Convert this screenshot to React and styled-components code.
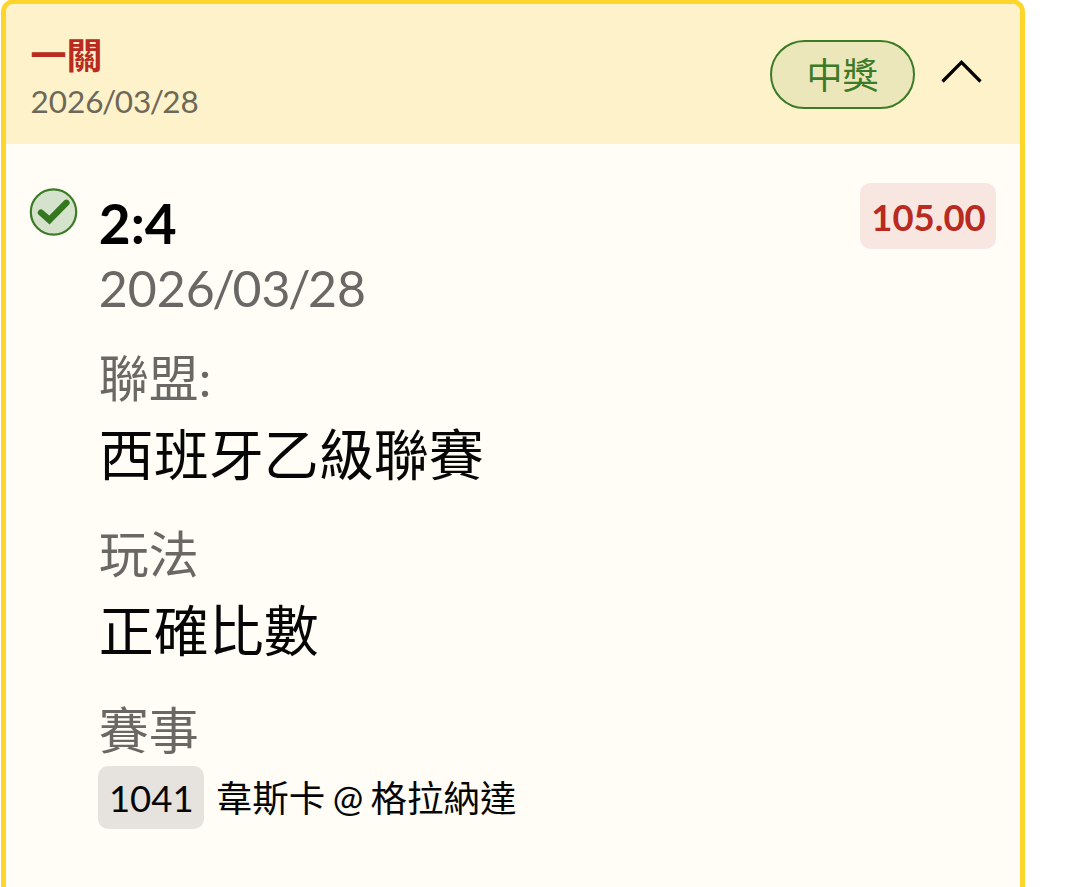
import React, { useState, useCallback } from 'react';
import styled, { createGlobalStyle, ThemeProvider } from 'styled-components';

const theme = {
    gold: '#fed52a',
    header: '#fef2cb',
    body: '#fffdf5',
    red: '#b92a20',
    green: '#3b7a27',
    text: '#060606',
};

const GlobalStyle = createGlobalStyle`
    *, *::before, *::after {
        box-sizing: border-box;
    }

    body {
        margin: 0;
        background: #fff;
        font-family: Lato, "Noto Sans CJK TC", sans-serif;
        overflow: hidden;
    }

    p, h2, h3, dl, dt, dd {
        margin: 0;
        font-weight: 400;
    }
`;

const Card = styled.article`
    width: 1024px;
    height: 920px;
    margin: -1px 0 -32px 1px;
    border: 5px solid ${(props) => props.theme.gold};
    border-radius: 13px;
    background: ${(props) => props.theme.body};
    overflow: hidden;
`;

const CardHeader = styled.header`
    display: flex;
    justify-content: space-between;
    align-items: flex-start;
    height: 140px;
    padding: 29px 36px 0 24.5px;
    background: ${(props) => props.theme.header};
`;

const ParlayName = styled.h2`
    && {
        font-size: 36px;
        font-weight: 700;
    }
    line-height: 44px;
    color: ${(props) => props.theme.red};
`;

const BetDate = styled.p`
    font-size: ${(props) => (props.$large ? 50 : 31.5)}px;
    line-height: ${(props) => (props.$large ? 64 : 48)}px;
    color: ${(props) => (props.$large ? '#696865' : '#6d6858')};
`;

// pulls the slash closer to the digits on both sides
const Tight = styled.span`
    letter-spacing: -0.05em;
`;

const HeaderActions = styled.div`
    display: flex;
    align-items: center;
    padding-top: 7px;
`;

const StatusPill = styled.span`
    display: flex;
    justify-content: center;
    align-items: center;
    width: 145px;
    height: 69px;
    border: 2px solid ${(props) => props.theme.green};
    border-radius: 35px;
    background: #ebe7bb;
    color: ${(props) => props.theme.green};
    font-size: 36px;
    line-height: 1;
`;

const ToggleButton = styled.button`
    display: flex;
    margin: 0 0 6px 24px;
    padding: 0;
    border: 0;
    background: none;
    color: #000;
    cursor: pointer;

    svg {
        transform: ${(props) => (props.$open ? 'none' : 'rotate(180deg)')};
    }
`;

const CardBody = styled.section`
    display: flex;
    align-items: flex-start;
    padding: 39px 24px 0 23px;
`;

const StatusIcon = styled.svg`
    flex: none;
    margin-top: 5px;
`;

const Details = styled.div`
    flex: 1;
    padding: 7px 0 0 20.8px;
`;

const Pick = styled.h3`
    && {
        font-weight: 700;
    }
    font-size: 55px;
    line-height: 66px;
    color: #000;
`;

const Field = styled.div`
    margin-top: ${(props) => props.$gap || 0}px;
`;

const Label = styled.dt`
    font-size: 50px;
    line-height: 72px;
    color: #696865;
`;

const Value = styled.dd`
    font-size: 55px;
    line-height: 80px;
    color: ${(props) => props.theme.text};
`;

const Match = styled.dd`
    display: flex;
    align-items: flex-start;
    font-size: 36.5px;
    line-height: 64px;
    word-spacing: -2px;
    color: ${(props) => props.theme.text};
`;

const MatchCode = styled.span`
    width: 106px;
    height: 63px;
    margin: 0 12px 0 -1px;
    padding-left: 1px;
    border-radius: 10px;
    background: #e6e3de;
    text-align: center;
`;

const Odds = styled.span`
    flex: none;
    width: 136px;
    height: 66px;
    padding-left: 1px;
    border-radius: 10px;
    background: #f8e7e0;
    color: ${(props) => props.theme.red};
    font-size: 36.5px;
    font-weight: 700;
    line-height: 68px;
    text-align: center;
`;

const bet = {
    parlay: '一關',
    date: '2026/03/28',
    status: '中獎',
    pick: '2:4',
    odds: '105.00',
    league: '西班牙乙級聯賽',
    market: '正確比數',
    code: '1041',
    match: '韋斯卡 @ 格拉納達',
};

function FormattedDate({ value }) {
    const [year, month, day] = value.split('/');
    return (
        <>
            {year.slice(0, -1)}
            <Tight>{year.slice(-1)}/</Tight>
            {month.slice(0, -1)}
            <Tight>{month.slice(-1)}/</Tight>
            {day}
        </>
    );
}

function WonIcon() {
    return (
        <StatusIcon width="49" height="48" viewBox="0 0 49 48" fill="none">
            <circle cx="24.5" cy="24" r="22.7" fill="#d5e2cc" stroke="#3b7a27" strokeWidth="2.2" />
            <path d="M12 24.6 20.4 32 37.4 14.8" stroke="#34771f" strokeWidth="6.4" strokeLinecap="round" />
        </StatusIcon>
    );
}

function App() {
    const [open, setOpen] = useState(true);
    const toggle = useCallback(() => setOpen((value) => !value), [setOpen]);

    return (
        <ThemeProvider theme={theme}>
            <GlobalStyle />
            <Card>
                <CardHeader>
                    <div>
                        <ParlayName>{bet.parlay}</ParlayName>
                        <BetDate><FormattedDate value={bet.date} /></BetDate>
                    </div>
                    <HeaderActions>
                        <StatusPill>{bet.status}</StatusPill>
                        <ToggleButton type="button" aria-label="Toggle" aria-expanded={open} $open={open} onClick={toggle}>
                            <svg width="45" height="26" viewBox="0 0 45 26" fill="none">
                                <path d="M3.5 22.5 22.5 3.3 41.5 22.5" stroke="currentColor" strokeWidth="3.2" />
                            </svg>
                        </ToggleButton>
                    </HeaderActions>
                </CardHeader>
                {open && (
                    <CardBody>
                        <WonIcon />
                        <Details>
                            <Pick>{bet.pick}</Pick>
                            <BetDate $large><FormattedDate value={bet.date} /></BetDate>
                            <dl>
                                <Field $gap={22}>
                                    <Label>聯盟:</Label>
                                    <Value>{bet.league}</Value>
                                </Field>
                                <Field $gap={24}>
                                    <Label>玩法</Label>
                                    <Value>{bet.market}</Value>
                                </Field>
                                <Field $gap={24}>
                                    <Label>賽事</Label>
                                    <Match>
                                        <MatchCode>{bet.code}</MatchCode>
                                        {bet.match}
                                    </Match>
                                </Field>
                            </dl>
                        </Details>
                        <Odds>{bet.odds}</Odds>
                    </CardBody>
                )}
            </Card>
        </ThemeProvider>
    );
}

export default App;
